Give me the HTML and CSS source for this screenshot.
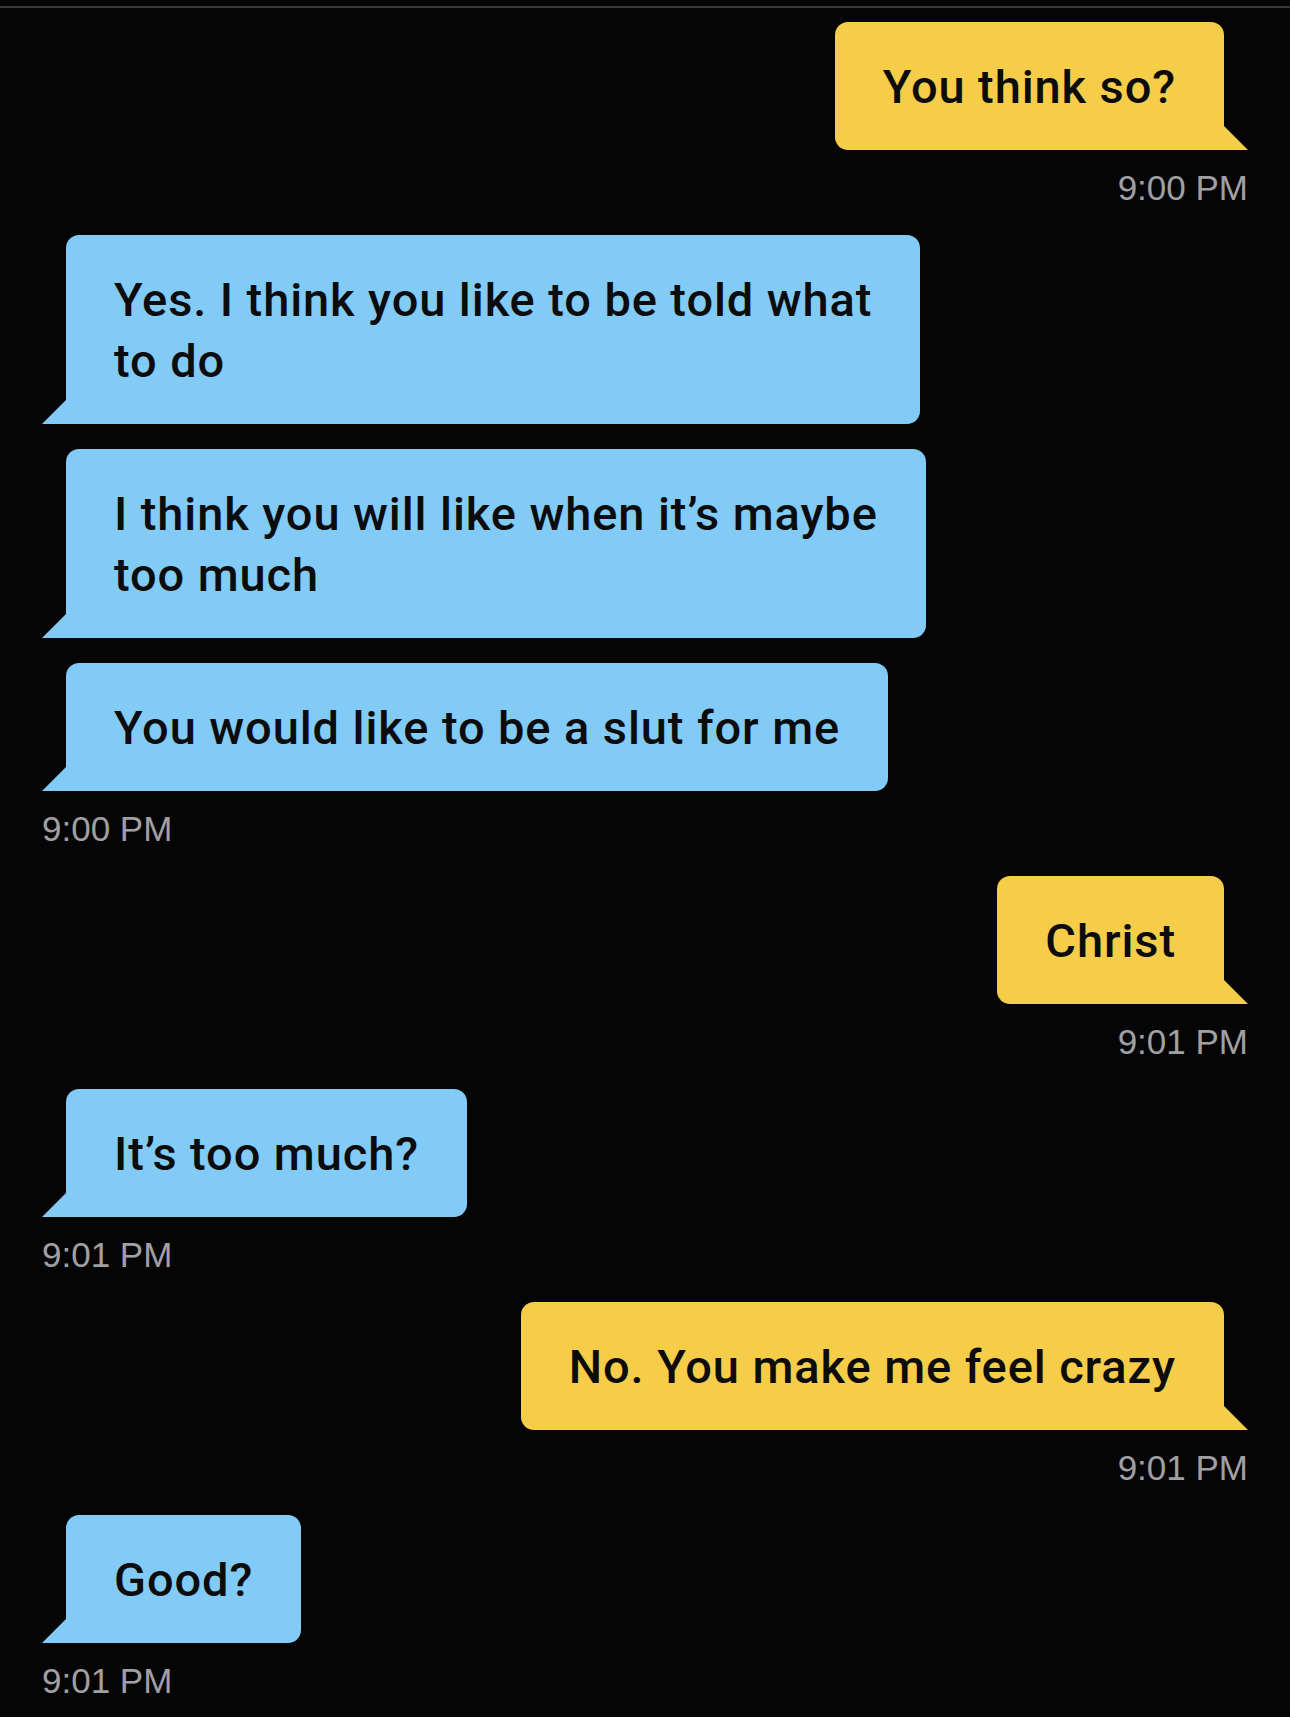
FILE: index.html
```html
<!DOCTYPE html>
<html lang="en">
<head>
    <meta charset="UTF-8">
    <title>Chat</title>
    <link rel="stylesheet" href="styles.css">
</head>
<body>
    <!-- Top divider -->
    <div class="divider"></div>

    <!-- Conversation -->
    <div class="chat">
        <div class="bubble out">You think so?</div>
        <div class="time out">9:00 PM</div>

        <div class="bubble in">Yes. I think you like to be told what<br>to do</div>
        <div class="bubble in">I think you will like when it’s maybe<br>too much</div>
        <div class="bubble in">You would like to be a slut for me</div>
        <div class="time in">9:00 PM</div>

        <div class="bubble out">Christ</div>
        <div class="time out">9:01 PM</div>

        <div class="bubble in">It’s too much?</div>
        <div class="time in">9:01 PM</div>

        <div class="bubble out">No. You make me feel crazy</div>
        <div class="time out">9:01 PM</div>

        <div class="bubble in">Good?</div>
        <div class="time in">9:01 PM</div>
    </div>
</body>
</html>
```

FILE: styles.css
```css
/* General */
body {
    margin: 0;
    padding: 0;
    background-color: #050505;
    font-family: Roboto, 'Noto Sans', sans-serif;
}

.divider {
    height: 2px;
    margin-top: 6px;
    background-color: #363636;
}

/* Conversation */
.chat {
    display: flex;
    flex-direction: column;
    padding: 14px 42px 0;
}

.bubble {
    position: relative;
    padding: 34px 48px 33px;
    font-size: 47px;
    font-weight: 500;
    letter-spacing: 0.9px;
    line-height: 61px;
    color: #0c0c0c;
    border-radius: 13px;
}
.bubble + .bubble {
    margin-top: 25px;
}

/* Bubble tail */
.bubble::after {
    content: "";
    position: absolute;
    bottom: 0;
    width: 24px;
    height: 24px;
    background-color: inherit;
}

/* Sent messages */
.bubble.out {
    align-self: flex-end;
    margin-right: 24px;
    background-color: #f5cd48;
    border-bottom-right-radius: 0;
}
.bubble.out::after {
    right: -24px;
    clip-path: polygon(0 0, 100% 100%, 0 100%);
}

/* Received messages */
.bubble.in {
    align-self: flex-start;
    margin-left: 24px;
    background-color: #82cbf7;
    border-bottom-left-radius: 0;
}
.bubble.in::after {
    left: -24px;
    clip-path: polygon(100% 0, 100% 100%, 0 100%);
}

/* Timestamps */
.time {
    margin: 18px 0 27px;
    font-family: 'Liberation Sans', Arial, sans-serif;
    font-size: 35px;
    line-height: 40px;
    color: #a0a0a4;
}
.time.out {
    align-self: flex-end;
}
.time.in {
    align-self: flex-start;
}
```
